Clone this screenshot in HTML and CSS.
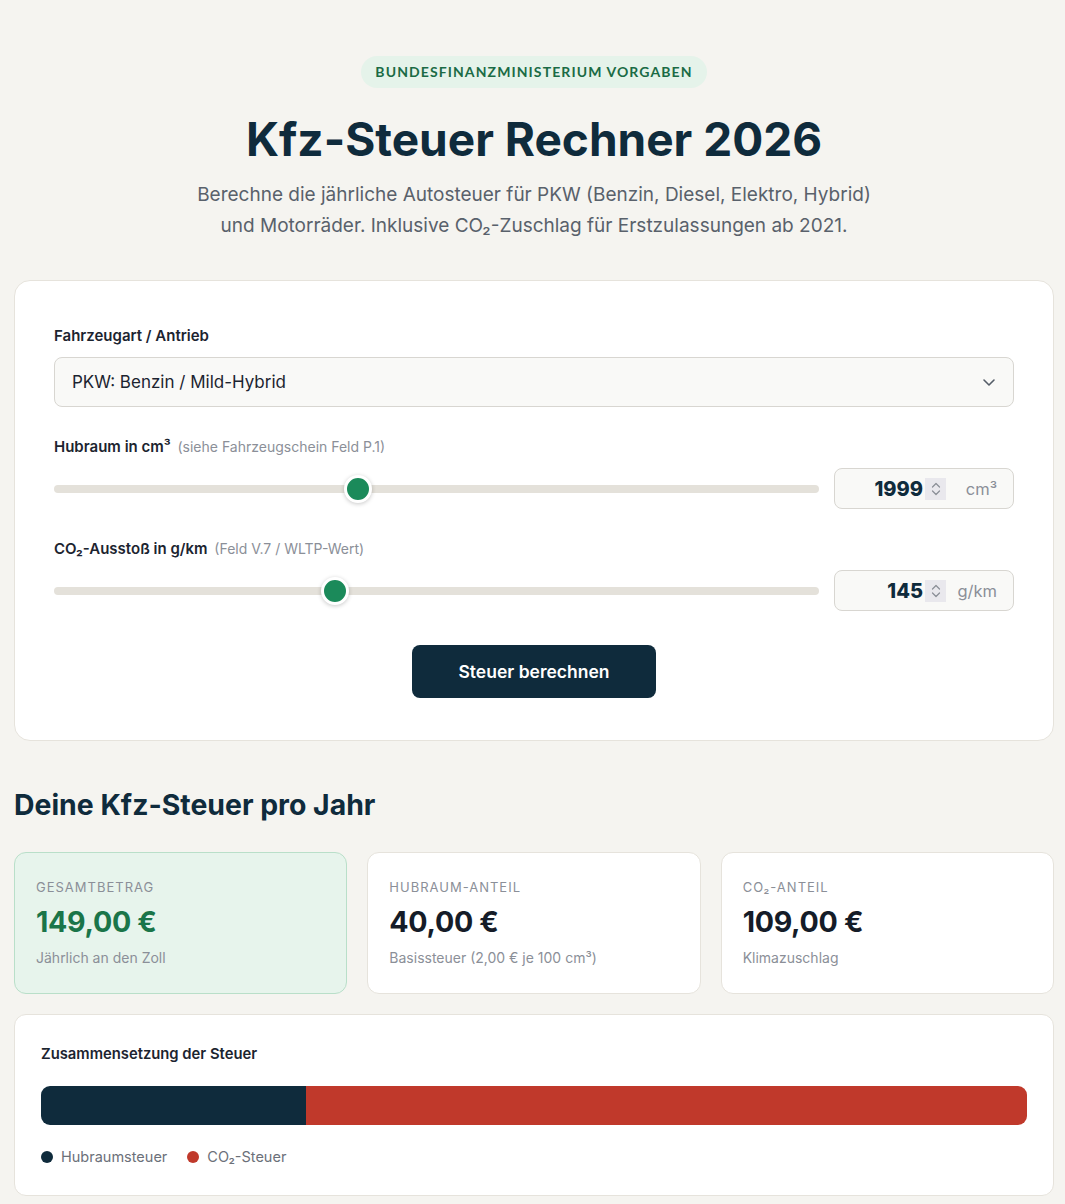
FILE: index.html
```html
<!DOCTYPE html>
<html lang="de">
<head>
<meta charset="utf-8">
<title>Kfz-Steuer Rechner 2026</title>
<link rel="stylesheet" href="styles.css">
</head>
<body>
<main class="page">
  <header class="hero">
    <span class="badge">Bundesfinanzministerium Vorgaben</span>
    <h1 class="title">Kfz-Steuer Rechner 2026</h1>
    <p class="lead">Berechne die jährliche Autosteuer für PKW (Benzin, Diesel, Elektro, Hybrid)<br>und Motorräder. Inklusive CO₂-Zuschlag für Erstzulassungen ab 2021.</p>
  </header>

  <section class="card form">
    <div class="field">
      <div class="label">Fahrzeugart / Antrieb</div>
      <div class="select">
        <span>PKW: Benzin / Mild-Hybrid</span>
        <svg class="chev" width="16" height="16" viewBox="0 0 16 16"><path d="M3 6l5 5 5-5" fill="none" stroke="#555d68" stroke-width="1.6" stroke-linecap="round" stroke-linejoin="round"/></svg>
      </div>
    </div>

    <div class="field">
      <div class="label">Hubraum in cm³ <span class="hint">(siehe Fahrzeugschein Feld P.1)</span></div>
      <div class="row">
        <input class="range" type="range" min="50" max="5000" value="1999">
        <div class="num">
          <span class="val">1999</span>
          <span class="spin"><svg width="12" height="18" viewBox="0 0 12 18"><path d="M2.5 7l3.5-3.5L9.5 7M2.5 11l3.5 3.5L9.5 11" fill="none" stroke="#8a8e96" stroke-width="1.2" stroke-linecap="round" stroke-linejoin="round"/></svg></span>
          <span class="unit">cm³</span>
        </div>
      </div>
    </div>

    <div class="field">
      <div class="label">CO₂-Ausstoß in g/km <span class="hint">(Feld V.7 / WLTP-Wert)</span></div>
      <div class="row">
        <input class="range" type="range" min="0" max="400" value="145">
        <div class="num">
          <span class="val">145</span>
          <span class="spin"><svg width="12" height="18" viewBox="0 0 12 18"><path d="M2.5 7l3.5-3.5L9.5 7M2.5 11l3.5 3.5L9.5 11" fill="none" stroke="#8a8e96" stroke-width="1.2" stroke-linecap="round" stroke-linejoin="round"/></svg></span>
          <span class="unit">g/km</span>
        </div>
      </div>
    </div>

    <div class="actions">
      <button class="btn" type="button">Steuer berechnen</button>
    </div>
  </section>

  <h2 class="subtitle">Deine Kfz-Steuer pro Jahr</h2>

  <section class="results">
    <div class="res res-main">
      <div class="res-label">Gesamtbetrag</div>
      <div class="res-value green">149,00 €</div>
      <div class="res-sub">Jährlich an den Zoll</div>
    </div>
    <div class="res">
      <div class="res-label">Hubraum-Anteil</div>
      <div class="res-value">40,00 €</div>
      <div class="res-sub">Basissteuer (2,00 € je 100 cm³)</div>
    </div>
    <div class="res">
      <div class="res-label">CO₂-Anteil</div>
      <div class="res-value">109,00 €</div>
      <div class="res-sub">Klimazuschlag</div>
    </div>
  </section>

  <section class="card chart">
    <div class="chart-title">Zusammensetzung der Steuer</div>
    <div class="bar">
      <div class="seg seg-a" style="width:26.85%"></div>
      <div class="seg seg-b" style="width:73.15%"></div>
    </div>
    <div class="legend">
      <span class="item"><i class="dot dot-a"></i>Hubraumsteuer</span>
      <span class="item"><i class="dot dot-b"></i>CO₂-Steuer</span>
    </div>
  </section>
</main>
</body>
</html>
```
FILE: styles.css
```css
* { box-sizing: border-box; }
html, body { margin: 0; padding: 0; }
body {
  background: #f5f4f0;
  font-family: "Inter", "Noto Sans", sans-serif;
  color: #0f2b3c;
}
.page {
  padding: 56px 11px 40px 14px;
}
.hero {
  display: flex;
  flex-direction: column;
  align-items: center;
  text-align: center;
}
.badge {
  display: inline-block;
  background: #e5f3ea;
  color: #1a6b45;
  font-family: "Lato", sans-serif;
  font-weight: 700;
  font-size: 14px;
  letter-spacing: 1.1px;
  text-transform: uppercase;
  line-height: 32px;
  height: 32px;
  padding: 0 14px;
  border-radius: 16px;
}
.title {
  margin: 20px 0 0;
  font-family: "Inter", sans-serif;
  font-weight: 700;
  font-size: 46px;
  letter-spacing: 0;
  line-height: 62px;
  color: #0f2b3c;
}
.lead {
  margin: 9px 0 0;
  font-size: 19px;
  line-height: 31px;
  color: #59616b;
}
.card {
  background: #fff;
  border: 1px solid #e6e3dc;
  border-radius: 16px;
}
.form {
  margin-top: 39px;
  padding: 45px 39px 42px;
}
.field { margin-bottom: 30px; }
.label {
  font-weight: 600;
  font-size: 15px;
  line-height: 20px;
  color: #1c2430;
  margin-bottom: 11px;
}
.hint {
  font-weight: 400;
  font-size: 14px;
  color: #8b8f98;
  margin-left: 3px;
}
.select {
  display: flex;
  align-items: center;
  justify-content: space-between;
  height: 50px;
  padding: 0 16px 0 17px;
  background: #f9f9f7;
  border: 1px solid #d8d6d1;
  border-radius: 8px;
  font-size: 17px;
  color: #1c2430;
}
.row {
  display: flex;
  align-items: center;
  gap: 15px;
}
.range {
  -webkit-appearance: none;
  appearance: none;
  flex: 1;
  margin: 0;
  height: 30px;
  background: transparent;
}
.range::-webkit-slider-runnable-track {
  height: 8px;
  border-radius: 4px;
  background: #e4e1da;
}
.range::-webkit-slider-thumb {
  -webkit-appearance: none;
  width: 28px;
  height: 28px;
  margin-top: -10px;
  border-radius: 50%;
  background: #1b8a5a;
  border: 3px solid #fff;
  box-shadow: 0 1px 4px rgba(0,0,0,0.22);
}
.num {
  width: 180px;
  height: 41px;
  display: flex;
  align-items: center;
  justify-content: flex-end;
  padding: 0 16px 0 10px;
  background: #f9f9f7;
  border: 1px solid #d8d6d1;
  border-radius: 8px;
}
.val {
  font-family: "Inter", sans-serif;
  font-weight: 800;
  font-size: 20px;
  color: #0f2b3c;
  margin-right: 2px;
}
.spin {
  width: 21px;
  height: 22px;
  background: #e9e8ed;
  display: flex;
  align-items: center;
  justify-content: center;
}
.unit {
  width: 42px;
  margin-left: 9px;
  text-align: right;
  font-size: 16.5px;
  color: #8b8f98;
}
.actions {
  display: flex;
  justify-content: center;
  margin-top: 34px;
}
.btn {
  width: 244px;
  height: 53px;
  background: #0f2b3c;
  color: #fff;
  border: none;
  border-radius: 8px;
  font-family: "Inter", sans-serif;
  font-weight: 600;
  font-size: 17.5px;
}
.subtitle {
  margin: 46px 0 0;
  font-family: "Inter", sans-serif;
  font-weight: 700;
  font-size: 28.4px;
  letter-spacing: 0;
  line-height: 36px;
  color: #0f2b3c;
}
.results {
  margin-top: 29px;
  display: grid;
  grid-template-columns: repeat(3, 1fr);
  gap: 20px;
}
.res {
  background: #fff;
  border: 1px solid #e6e3dc;
  border-radius: 12px;
  height: 142px;
  padding: 25px 21px 0;
}
.res-main {
  background: #e7f4ec;
  border-color: #b9dfc9;
}
.res-label {
  font-size: 13px;
  letter-spacing: 1px;
  text-transform: uppercase;
  color: #8b8f98;
  line-height: 18px;
}
.res-value {
  margin-top: 8px;
  font-family: "Inter", sans-serif;
  font-weight: 700;
  font-size: 28.6px;
  letter-spacing: -0.3px;
  line-height: 36px;
  color: #151c28;
}
.res-value.green { color: #1a7549; }
.res-sub {
  margin-top: 8px;
  font-size: 14px;
  color: #8b8f98;
  line-height: 20px;
}
.chart {
  margin-top: 20px;
  padding: 29px 26px 28px;
  border-radius: 12px;
}
.chart-title {
  font-weight: 600;
  font-size: 14.8px;
  color: #1c2430;
  line-height: 20px;
}
.bar {
  margin-top: 22px;
  height: 39px;
  display: flex;
  border-radius: 9px;
  overflow: hidden;
}
.seg-a { background: #0f2b3c; }
.seg-b { background: #c0392b; }
.legend {
  margin-top: 22px;
  display: flex;
  gap: 20px;
  font-size: 14.5px;
  color: #6b7079;
  line-height: 20px;
}
.item { display: flex; align-items: center; }
.dot {
  width: 12px;
  height: 12px;
  border-radius: 50%;
  margin-right: 8px;
  display: inline-block;
}
.dot-a { background: #0f2b3c; }
.dot-b { background: #c0392b; }
```
